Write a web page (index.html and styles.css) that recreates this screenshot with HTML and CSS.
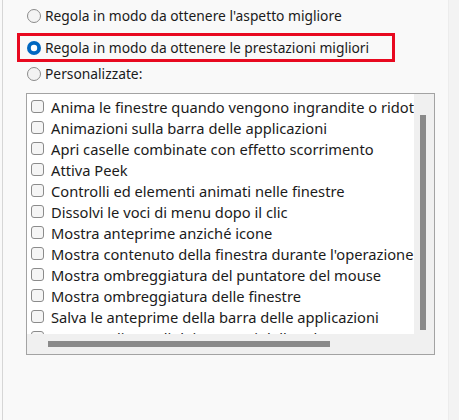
FILE: index.html
```html
<!DOCTYPE html>
<html lang="it">
<head>
<meta charset="utf-8">
<link rel="stylesheet" href="styles.css">
</head>
<body>
<div class="page">
  <div class="edge"></div>
  <div class="main">
    <div class="radio-row plain">
      <svg class="radio" width="14" height="14" viewBox="0 0 14 14"><circle cx="7" cy="7" r="6.5" fill="#f3f3f3" stroke="#8b8b8b" stroke-width="1"/></svg>
      <span>Regola in modo da ottenere l'aspetto migliore</span>
    </div>
    <div class="radio-row boxed">
      <svg class="radio" width="14" height="14" viewBox="0 0 14 14"><circle cx="7" cy="7" r="7" fill="#0067c0"/><circle cx="7" cy="7" r="3.2" fill="#ffffff"/></svg>
      <span>Regola in modo da ottenere le prestazioni migliori</span>
    </div>
    <div class="radio-row plain">
      <svg class="radio" width="14" height="14" viewBox="0 0 14 14"><circle cx="7" cy="7" r="6.5" fill="#f3f3f3" stroke="#8b8b8b" stroke-width="1"/></svg>
      <span>Personalizzate:</span>
    </div>
    <div class="listbox">
      <div class="items">
        <div class="item"><span class="check"></span><span class="label">Anima le finestre quando vengono ingrandite o ridotte al</span></div>
        <div class="item"><span class="check"></span><span class="label">Animazioni sulla barra delle applicazioni</span></div>
        <div class="item"><span class="check"></span><span class="label">Apri caselle combinate con effetto scorrimento</span></div>
        <div class="item"><span class="check"></span><span class="label">Attiva Peek</span></div>
        <div class="item"><span class="check"></span><span class="label">Controlli ed elementi animati nelle finestre</span></div>
        <div class="item"><span class="check"></span><span class="label">Dissolvi le voci di menu dopo il clic</span></div>
        <div class="item"><span class="check"></span><span class="label">Mostra anteprime anziché icone</span></div>
        <div class="item"><span class="check"></span><span class="label">Mostra contenuto della finestra durante l'operazione di trascinamento</span></div>
        <div class="item"><span class="check"></span><span class="label">Mostra ombreggiatura del puntatore del mouse</span></div>
        <div class="item"><span class="check"></span><span class="label">Mostra ombreggiatura delle finestre</span></div>
        <div class="item"><span class="check"></span><span class="label">Salva le anteprime della barra delle applicazioni</span></div>
        <div class="item"><span class="check"></span><span class="label">Smussa gli angoli dei caratteri dello schermo</span></div>
      </div>
      <div class="vscroll"><div class="vthumb"></div></div>
      <div class="hscroll"><div class="hthumb"></div></div>
      <div class="corner"></div>
    </div>
  </div>
  <div class="rightstrip"></div>
</div>
</body>
</html>
```
FILE: styles.css
```css
html, body {
  margin: 0;
  padding: 0;
  background: #f9f9f9;
}
body {
  font-family: "Noto Sans", "Open Sans", sans-serif;
  font-size: 13.8px;
  color: #1b1b1b;
}
.page {
  display: flex;
  height: 420px;
  width: 459px;
}
.edge {
  width: 2px;
  border-right: 1px solid #d6d6d6;
  flex: none;
}
.main {
  flex: none;
  width: 445px;
  padding-left: 14px;
  padding-top: 5px;
  box-sizing: border-box;
}
.rightstrip {
  flex: 1;
  background: #f3f3f3;
  border-left: 1px solid #ececec;
}
.radio-row {
  display: flex;
  align-items: center;
  gap: 4px;
  height: 22px;
  white-space: nowrap;
}
.radio-row .radio {
  flex: none;
}
.plain {
  padding-left: 10px;
}
.boxed {
  box-sizing: border-box;
  margin-top: 6px;
  width: 378px;
  height: 29px;
  border: 3px solid #e8091f;
  padding-left: 7px;
  margin-bottom: 1px;
}
.radio-row span {
  line-height: 22px;
}
.listbox {
  margin-top: 8px;
  margin-left: 9px;
  width: 409px;
  height: 262px;
  box-sizing: border-box;
  border: 1px solid #a3a3a3;
  display: grid;
  grid-template-columns: 1fr 20px;
  grid-template-rows: 1fr 20px;
  background: #f0f0f0;
}
.items {
  background: #ffffff;
  overflow: hidden;
  padding-top: 2px;
  padding-left: 4px;
  font-size: 14.7px;
}
.item {
  display: flex;
  align-items: center;
  height: 21px;
  gap: 7px;
  white-space: nowrap;
}
.check {
  flex: none;
  width: 13px;
  height: 13px;
  box-sizing: border-box;
  border: 1px solid #8b8b8b;
  border-radius: 3px;
  background: #f5f5f5;
}
.vscroll {
  background: #f0f0f0;
  position: relative;
}
.vthumb {
  position: absolute;
  left: 6px;
  top: 21px;
  width: 6px;
  height: 215px;
  background: #8a8a8a;
}
.hscroll {
  background: #f0f0f0;
  position: relative;
}
.hthumb {
  position: absolute;
  left: 21px;
  top: 7px;
  width: 282px;
  height: 6px;
  background: #8a8a8a;
}
.corner {
  background: #f0f0f0;
}
```
